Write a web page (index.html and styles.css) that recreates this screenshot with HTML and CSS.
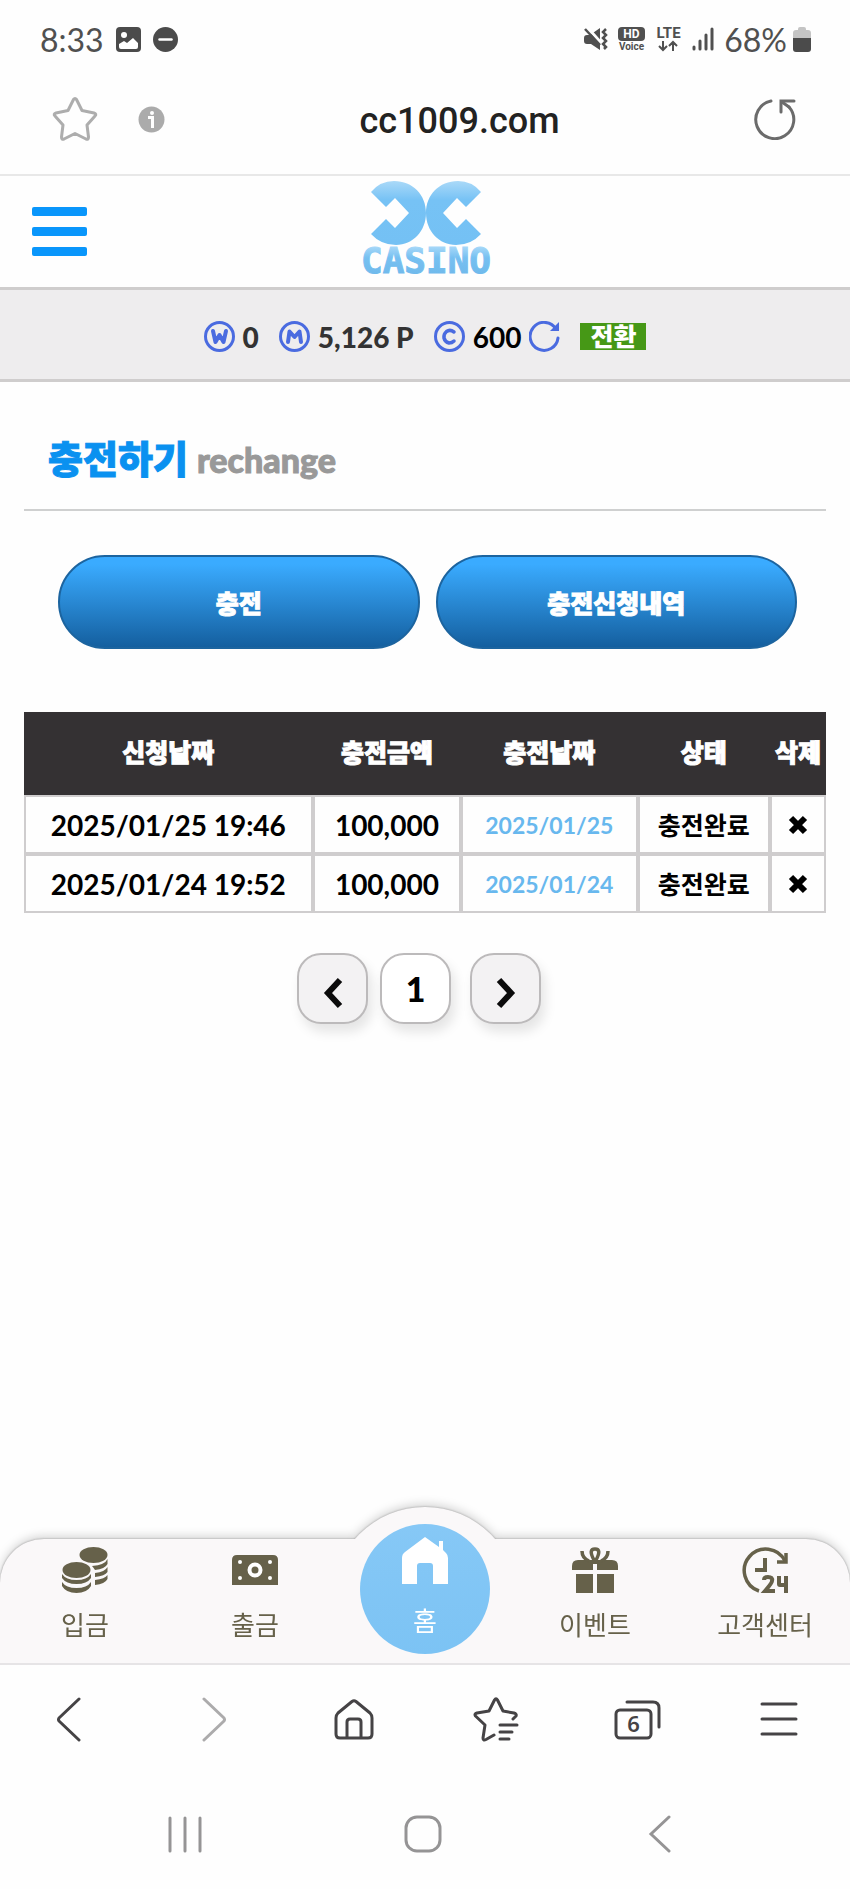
FILE: index.html
```html
<!DOCTYPE html>
<html lang="ko">
<head>
  <meta charset="utf-8">
  <meta name="viewport" content="width=device-width, initial-scale=1">
  <title>cc1009.com</title>
  <link rel="stylesheet" href="styles.css">
</head>
<body>
  <div class="status-bar">
    <div class="status-left">
      <span class="clock">8:33</span>
      <svg width="25" height="25" viewBox="0 0 25 25">
        <rect width="25" height="25" rx="4" fill="#4b4b4b"/>
        <circle cx="8" cy="8" r="3" fill="#fff"/>
        <path d="M3 17 L8 14 L11 16 L17 11 L22 16 V20 Q22 22 20 22 H5 Q3 22 3 20 Z" fill="#fff"/>
      </svg>
      <svg width="25" height="25" viewBox="0 0 25 25">
        <circle cx="12.500" cy="12.500" r="12.500" fill="#4b4b4b"/>
        <path d="M6.500 12.500 H18.500" stroke="#fff" stroke-width="2.500" stroke-linecap="round"/>
      </svg>
    </div>
    <div class="status-right">
      <svg width="24" height="25" viewBox="0 0 24 25" fill="none">
        <path d="M0 11 Q0 8 3 8 H6 L16 1 V23 L7 17 H3 Q0 17 0 14 Z" fill="#505050"/>
        <path d="M3 0 L19 18" stroke="#fff" stroke-width="3"/>
        <path d="M1 2 L16 18" stroke="#505050" stroke-width="2.500"/>
        <path d="M22 2 L19 5 L22 8 L19 11 L22 14 L19 17 L22 20 L20 22" stroke="#505050" stroke-width="2.500"/>
      </svg>
      <svg width="27" height="27" viewBox="0 0 27 27">
        <rect y="1" width="27" height="14" rx="4" fill="#505050"/>
        <text x="13.500" y="12" class="hd-text">HD</text>
        <text x="13.500" y="24" class="voice-text">Voice</text>
      </svg>
      <svg width="27" height="30" viewBox="0 0 27 30" fill="none">
        <text x="13.500" y="14" class="lte-text">LTE</text>
        <path d="M8 17 V26 M4 22 L8 26 L12 22 M18 27 V18 M14 22 L18 18 L22 22" stroke="#505050" stroke-width="2"/>
      </svg>
      <svg width="22" height="24" viewBox="0 0 22 24" stroke="#505050" stroke-width="3" stroke-linecap="round">
        <path d="M2 20 V22 M8 14 V22 M14 8 V22 M20 2 V22"/>
      </svg>
      <span class="battery-text">68%</span>
      <svg width="18" height="25" viewBox="0 0 18 25">
        <path d="M3 3 H5 V2 Q5 0 7 0 H11 Q13 0 13 2 V3 H15 Q18 3 18 6 V12 H0 V6 Q0 3 3 3 Z" fill="#c4c4c4"/>
        <path d="M0 11 H18 V22 Q18 25 15 25 H3 Q0 25 0 22 Z" fill="#4b4b4b"/>
      </svg>
    </div>
  </div>

  <div class="url-bar">
    <div class="url-left">
      <button type="button" aria-label="Bookmark">
        <svg width="46" height="46" viewBox="0 0 46 46" fill="none" stroke="#adadad" stroke-width="3" stroke-linejoin="round">
          <path d="M21.500 3.500 Q23 1.500 24.500 3.500 L30 14.500 L42 17 Q45 18 43 20 L35 29 L36.500 41 Q36.500 44 34 43 L23 37.500 L12 43 Q9.500 44 9.500 41 L11 29 L3 20 Q1 18 4 17 L16 14.500 Z"/>
        </svg>
      </button>
      <button type="button" aria-label="Site info">
        <svg width="27" height="27" viewBox="0 0 27 27">
          <circle cx="13.500" cy="13.500" r="13" fill="#ababab"/>
          <path d="M10 11.500 H14.500 V22" fill="none" stroke="#fff" stroke-width="3"/>
          <circle cx="14" cy="7" r="2" fill="#fff"/>
        </svg>
      </button>
    </div>
    <span class="url">cc1009.com</span>
    <button type="button" aria-label="Reload">
      <svg width="42" height="42" viewBox="0 0 42 42" fill="none" stroke="#6b6b6b" stroke-width="3" stroke-linecap="round">
        <path d="M17 3 A19 19 0 1 0 35 9"/>
        <path d="M27 14 V3 H40"/>
        <path d="M28 4 L35 9"/>
      </svg>
    </button>
  </div>

  <header class="site-header">
    <button type="button" class="menu-btn" aria-label="Menu">
      <span></span>
      <span></span>
      <span></span>
    </button>
    <a href="#" class="logo" aria-label="CC CASINO">
      <svg width="134" height="104" viewBox="-2 0 134 104">
        <defs>
          <linearGradient id="markFill" gradientUnits="userSpaceOnUse" x1="0" y1="1" x2="0" y2="65">
            <stop offset="0" stop-color="#aad9f8"/>
            <stop offset=".3" stop-color="#76c2f5"/>
            <stop offset="1" stop-color="#74c1f4"/>
          </linearGradient>
          <linearGradient id="wordFill" gradientUnits="userSpaceOnUse" x1="0" y1="67" x2="0" y2="94">
            <stop offset="0" stop-color="#a5d7f8"/>
            <stop offset=".4" stop-color="#76c0f1"/>
            <stop offset="1" stop-color="#70baec"/>
          </linearGradient>
        </defs>
        <g fill="url(#markFill)">
          <path d="M11 12 Q20 1 34 1 C53 1 66 15 66 33 C66 51 53 65 36 65 Q21 65 11 54 L26 39 L35 48 L49 33 L35 18 L26 27 Z"/>
          <path d="M121 12 Q112 1 98 1 C79 1 66 15 66 33 C66 51 79 65 96 65 Q111 65 121 54 L106 39 L97 48 L83 33 L97 18 L106 27 Z"/>
        </g>
        <text x="66" y="93" class="logo-text" fill="url(#wordFill)" stroke="url(#wordFill)">CASINO</text>
      </svg>
    </a>
  </header>

  <div class="balance-bar">
    <div class="balance">
      <svg width="31" height="31" viewBox="0 0 31 31" fill="none" stroke="#4a6be0" stroke-width="3">
        <circle cx="15.500" cy="15.500" r="14"/>
        <path d="M9 10 L11.500 21 L15.500 14 L19.500 21 L22 10" stroke-width="4" stroke-linejoin="round" stroke-linecap="round"/>
      </svg>
      <span>0</span>
    </div>
    <div class="balance">
      <svg width="31" height="31" viewBox="0 0 31 31" fill="none" stroke="#4a6be0" stroke-width="3">
        <circle cx="15.500" cy="15.500" r="14"/>
        <path d="M9 21 L10.500 10.500 L15.500 16 L20.500 10.500 L22 21" stroke-width="4" stroke-linejoin="round" stroke-linecap="round"/>
      </svg>
      <span>5,126 P</span>
    </div>
    <div class="balance casino">
      <svg width="31" height="31" viewBox="0 0 31 31" fill="none" stroke="#4a6be0" stroke-width="3">
        <circle cx="15.500" cy="15.500" r="14"/>
        <path d="M20 11 Q16 8 12.500 10.500 Q9.500 13 10 17 Q11 21 15 22 Q18 22 20 20" stroke-width="3.500" stroke-linecap="round"/>
      </svg>
      <span>600</span>
      <button type="button" aria-label="Refresh">
        <svg width="31" height="31" viewBox="0 0 31 31" fill="none" stroke="#4a6be0" stroke-width="3">
          <path d="M27 8 A14 14 0 1 0 29 17" stroke-linecap="round"/>
          <path d="M30 1 V10 H21 Z" fill="#4a6be0" stroke="none"/>
        </svg>
      </button>
    </div>
    <button type="button" class="convert-btn">전환</button>
  </div>

  <main class="content">
    <h1 class="page-title">충전하기 <small>rechange</small></h1>

    <div class="tabs">
      <button type="button">충전</button>
      <button type="button">충전신청내역</button>
    </div>

    <table class="history">
      <colgroup>
        <col class="col-request">
        <col class="col-amount">
        <col class="col-date">
        <col class="col-status">
        <col class="col-delete">
      </colgroup>
      <thead>
        <tr>
          <th>신청날짜</th>
          <th>충전금액</th>
          <th>충전날짜</th>
          <th>상태</th>
          <th>삭제</th>
        </tr>
      </thead>
      <tbody>
        <tr>
          <td>2025/01/25 19:46</td>
          <td>100,000</td>
          <td class="date">2025/01/25</td>
          <td class="state">충전완료</td>
          <td>
            <button type="button" aria-label="삭제">
              <svg width="20" height="20" viewBox="0 0 20 20"><path d="M3 3 L17 17 M17 3 L3 17" stroke="#000" stroke-width="6"/></svg>
            </button>
          </td>
        </tr>
        <tr>
          <td>2025/01/24 19:52</td>
          <td>100,000</td>
          <td class="date">2025/01/24</td>
          <td class="state">충전완료</td>
          <td>
            <button type="button" aria-label="삭제">
              <svg width="20" height="20" viewBox="0 0 20 20"><path d="M3 3 L17 17 M17 3 L3 17" stroke="#000" stroke-width="6"/></svg>
            </button>
          </td>
        </tr>
      </tbody>
    </table>

    <div class="pagination">
      <button type="button" class="arrow" aria-label="Previous">
        <svg width="20" height="32" viewBox="0 0 20 32" fill="none" stroke="#0b0b0b" stroke-width="6"><path d="M17 3 L5 16 L17 29"/></svg>
      </button>
      <button type="button">1</button>
      <button type="button" class="arrow next" aria-label="Next">
        <svg width="20" height="32" viewBox="0 0 20 32" fill="none" stroke="#0b0b0b" stroke-width="6"><path d="M3 3 L15 16 L3 29"/></svg>
      </button>
    </div>
  </main>

  <nav class="bottom-nav">
    <a href="#">
      <svg width="46" height="46" viewBox="0 0 46 46" fill="#66614a">
        <ellipse cx="31.500" cy="8" rx="14" ry="8"/>
        <path d="M30 19 Q43 18 45.500 12 V17 Q43 22 33 23 Q31 20 30 19 Z"/>
        <path d="M33 26 Q43 25 45.500 20 V25 Q43 29 33 30 Z"/>
        <path d="M33 33 Q43 32 45.500 28 V32 Q43 37 33 38 Z"/>
        <ellipse cx="14.500" cy="23" rx="14" ry="8"/>
        <path d="M0 27 Q4 33 14.500 33 Q25 33 29 27 V31 Q25 37 14.500 37 Q4 37 0 31 Z"/>
        <path d="M0 35 Q4 41 14.500 41 Q25 41 29 35 V39 Q25 46 14.500 46 Q4 46 0 39 Z"/>
      </svg>
      <span>입금</span>
    </a>
    <a href="#">
      <svg width="46" height="46" viewBox="0 0 46 46">
        <path d="M5 8 H41 Q46 8 46 13 V38 H0 V13 Q0 8 5 8 Z" fill="#66614a"/>
        <circle cx="23" cy="23" r="5.500" fill="none" stroke="#fff" stroke-width="4"/>
        <g fill="#fff">
          <circle cx="8" cy="15" r="2"/>
          <circle cx="38" cy="15" r="2"/>
          <circle cx="8" cy="31" r="2"/>
          <circle cx="38" cy="31" r="2"/>
        </g>
      </svg>
      <span>출금</span>
    </a>
    <div class="home-slot">
      <a href="#" class="home">
        <svg width="48" height="48" viewBox="0 0 48 48" fill="#fff">
          <path d="M24 0 L38 10 V4 H42 V13 L45 16 Q47 18 47 21 V47 H32 V29 Q32 26 29 26 H19 Q16 26 16 29 V47 H1 V21 Q1 17 4 15 Z"/>
        </svg>
        <span>홈</span>
      </a>
    </div>
    <a href="#">
      <svg width="46" height="46" viewBox="0 0 46 46" fill="#66614a">
        <path d="M0 23 V19 Q0 13 6 13 H40 Q46 13 46 19 V23 H25 V17 H21 V23 Z"/>
        <path d="M4 27 H21 V46 H4 Z M25 27 H42 V46 H25 Z"/>
        <g fill="none" stroke="#66614a" stroke-width="3.500">
          <path d="M22 13 Q16 2 23 2 Q30 2 24 13 M17 14 Q10 11 10 4 M29 14 Q36 11 36 4"/>
        </g>
      </svg>
      <span>이벤트</span>
    </a>
    <a href="#">
      <svg width="46" height="46" viewBox="0 0 46 46" fill="none" stroke="#66614a" stroke-width="3.500">
        <path d="M17 44 A21.500 21.500 0 1 1 43 14"/>
        <path d="M44 6 V15 H35"/>
        <path d="M23 11 V23 H13" stroke-width="4"/>
        <path d="M22 33 Q22 30 26 30 Q31 30 30 34 Q30 36 23 44 H33 M37 29 V37 Q37 38 38 38 H44 M44 29 V46" stroke-width="4"/>
      </svg>
      <span>고객센터</span>
    </a>
  </nav>

  <div class="browser-bar">
    <button type="button" aria-label="Back">
      <svg width="46" height="46" viewBox="0 0 46 46"><path d="M31 3 L11 22 Q10 23.500 11 25 L31 44"/></svg>
    </button>
    <button type="button" class="muted" aria-label="Forward">
      <svg width="46" height="46" viewBox="0 0 46 46"><path d="M15 3 L35 22 Q36 23.500 35 25 L15 44"/></svg>
    </button>
    <button type="button" aria-label="Home">
      <svg width="46" height="46" viewBox="0 0 46 46"><path d="M21 5.500 Q23 4 25 5.500 L39 17 Q41 19 41 22 V38 Q41 42 37 42 H9 Q5 42 5 38 V22 Q5 19 7 17 Z M16 42 V26 Q16 23 19 23 H27 Q30 23 30 26 V42"/></svg>
    </button>
    <button type="button" aria-label="Bookmarks">
      <svg width="46" height="46" viewBox="0 0 46 46"><path d="M40 23 L43 20 Q44 18 41 17 L30 15 L24.500 4 Q23 1.500 21.500 4 L16 15 L4 17 Q1 18 2.500 20 L12 29 L10 42 Q10 45 13 43.500 L21 39 M27 29 H44 M27 36 H39 M27 43 H36"/></svg>
    </button>
    <button type="button" aria-label="Tabs">
      <svg width="48" height="46" viewBox="0 0 48 46">
        <path d="M14 6 H40 Q46 6 46 12 V31"/>
        <rect x="3" y="14" width="35" height="28" rx="4"/>
        <text x="20.500" y="36" class="tab-count">6</text>
      </svg>
    </button>
    <button type="button" aria-label="Browser menu">
      <svg width="46" height="46" viewBox="0 0 46 46"><path d="M6 8 H40 M6 23 H40 M6 38 H40"/></svg>
    </button>
  </div>

  <div class="system-bar">
    <button type="button" aria-label="Recents">
      <svg width="38" height="38" viewBox="0 0 38 38"><path d="M4 3 V36 M19 3 V36 M34 3 V36"/></svg>
    </button>
    <button type="button" aria-label="System home">
      <svg width="38" height="38" viewBox="0 0 38 38"><rect x="2" y="2" width="34" height="34" rx="11"/></svg>
    </button>
    <button type="button" aria-label="System back">
      <svg width="38" height="38" viewBox="0 0 38 38"><path d="M27 2 L9 19 L27 36"/></svg>
    </button>
  </div>
</body>
</html>
```
FILE: styles.css
```css
* {
  box-sizing: border-box;
}
body {
  margin: 0;
  min-height: 100vh;
  display: flex;
  flex-direction: column;
  background-color: #fefefe;
  color: #000;
  font-family: Lato, "Noto Sans CJK KR", sans-serif;
}
button {
  padding: 0;
  border: none;
  background: none;
  color: inherit;
  font-family: inherit;
  cursor: pointer;
}
a {
  text-decoration: none;
  color: inherit;
}
svg {
  display: block;
}

/* phone status bar */
.status-bar {
  display: flex;
  justify-content: space-between;
  height: 78px;
  padding: 0 39px 0 40px;
  color: #505050;
  font-size: 32px;
}
.status-left, .status-right {
  display: flex;
  align-items: center;
  gap: 12px;
}
.status-right {
  gap: 10px;
}
.battery-text {
  margin-right: -4px;
}
.hd-text, .voice-text, .lte-text {
  font-family: Roboto, sans-serif;
  font-weight: 700;
  text-anchor: middle;
  fill: #505050;
}
.hd-text {
  font-size: 12px;
  fill: #fff;
}
.voice-text {
  font-size: 10px;
}
.lte-text {
  font-size: 15px;
}

/* address bar */
.url-bar {
  display: flex;
  align-items: center;
  height: 98px;
  padding: 0 54px 14px 52px;
  border-bottom: 2px solid #e8e8e8;
}
.url-left {
  display: flex;
  align-items: center;
  gap: 40px;
}
.url {
  flex: 1;
  padding-top: 4px;
  text-align: center;
  font-family: Roboto, sans-serif;
  font-size: 36px;
  font-weight: 500;
  color: #222;
}

/* site header */
.site-header {
  display: grid;
  grid-template-columns: 1fr auto 1fr;
  align-items: center;
  height: 114px;
  padding: 0 32px;
  border-bottom: 3px solid #cfcdcd;
}
.menu-btn {
  width: 55px;
  display: flex;
  flex-direction: column;
  gap: 11px;
}
.menu-btn span {
  height: 9px;
  border-radius: 2px;
  background-color: #0996fb;
}
.logo-text {
  font-family: "DejaVu Sans Mono", monospace;
  font-size: 36px;
  font-weight: 700;
  text-anchor: middle;
}

/* balances */
.balance-bar {
  display: flex;
  justify-content: center;
  align-items: center;
  gap: 20px;
  height: 92px;
  padding-top: 4px;
  background-color: #eeedee;
  border-bottom: 3px solid #cfcdcd;
  color: #333;
  font-size: 28px;
  font-weight: 900;
}
.balance {
  display: flex;
  align-items: center;
  gap: 8px;
}
.casino {
  color: #000;
  font-weight: 700;
}
.convert-btn {
  width: 66px;
  height: 27px;
  background-color: #469816;
  color: #fff;
  font-size: 25px;
  font-weight: 900;
  line-height: 25px;
}

/* page content */
.content {
  flex: 1;
  padding: 0 24px;
}
.page-title {
  margin: 0;
  height: 129px;
  padding: 49px 24px 0;
  border-bottom: 2px solid #cfd0d0;
  color: #0a91f0;
  font-size: 38px;
  font-weight: 900;
  line-height: 54px;
  -webkit-text-stroke: 1px;
}
.page-title small {
  color: #999;
  font-size: 34px;
}
.tabs {
  display: flex;
  gap: 16px;
  margin: 44px 29px 63px 34px;
}
.tabs button {
  flex: 1;
  height: 94px;
  border: 2px solid #1c649f;
  border-radius: 47px;
  background: linear-gradient(#3aabff 8%, #145f9f);
  color: #fff;
  font-size: 25px;
  font-weight: 900;
  -webkit-text-stroke: 1px;
}
.history {
  width: 100%;
  table-layout: fixed;
  border-collapse: separate;
  border-spacing: 0;
  text-align: center;
}
.col-request {
  width: 36%;
}
.col-amount {
  width: 18.5%;
}
.col-date {
  width: 22%;
}
.col-status {
  width: 16.5%;
}
.col-delete {
  width: 7%;
}
.history th {
  height: 83px;
  padding: 0 0 6px;
  background-color: #343133;
  color: #fff;
  font-size: 25px;
  font-weight: 900;
  -webkit-text-stroke: 1px;
}
.history td {
  height: 59px;
  padding: 0;
  border: 2px solid #cfcdce;
  font-size: 28px;
  font-weight: 700;
  line-height: 40px;
}
.history td.date {
  color: #68b8ee;
  font-size: 23px;
}
.history td.state {
  font-size: 25px;
}
.history td button {
  display: block;
  margin: 0 auto;
}
.pagination {
  display: flex;
  justify-content: center;
  gap: 12px;
  margin: 40px 12px 60px 0;
}
.pagination button {
  width: 71px;
  height: 71px;
  border: 2px solid #bcbabb;
  border-radius: 24px;
  background-color: #fff;
  box-shadow: 4px 8px 12px rgba(0, 0, 0, 0.1);
  font-size: 34px;
  font-weight: 900;
}
.pagination .arrow {
  display: flex;
  justify-content: center;
  align-items: center;
  padding-top: 8px;
  background-color: #f3f2f3;
}
.pagination .next {
  margin-left: 7px;
}

/* bottom menu */
.bottom-nav {
  position: relative;
  display: grid;
  grid-template-columns: repeat(5, 1fr);
  height: 124px;
  padding-top: 8px;
  border-radius: 44px 44px 0 0;
  background-color: #faf8f9;
  filter: drop-shadow(0 0 1px #999) drop-shadow(0 -3px 4px rgba(0, 0, 0, 0.15));
  color: #66614a;
  font-size: 26px;
}
.bottom-nav::before {
  content: "";
  position: absolute;
  top: -32px;
  left: 50%;
  width: 186px;
  height: 93px;
  margin-left: -93px;
  border-radius: 93px 93px 0 0;
  background-color: #faf8f9;
}
.bottom-nav a {
  display: flex;
  flex-direction: column;
  align-items: center;
  gap: 16px;
  line-height: 32px;
}
.home-slot {
  position: relative;
}
.bottom-nav .home {
  position: absolute;
  top: -23px;
  left: 50%;
  width: 130px;
  height: 130px;
  margin-left: -65px;
  padding-top: 13px;
  gap: 20px;
  border-radius: 50%;
  background: linear-gradient(#86c8f6, #7cc3f4);
  color: #fff;
}

/* browser toolbar */
.browser-bar {
  position: relative;
  display: grid;
  grid-template-columns: repeat(6, 1fr);
  justify-items: center;
  align-items: center;
  height: 110px;
  border-top: 2px solid #e6e4e6;
  background-color: #fefefe;
}
.browser-bar svg {
  fill: none;
  stroke: #454345;
  stroke-width: 3;
  stroke-linecap: round;
  stroke-linejoin: round;
}
.browser-bar .muted svg {
  stroke: #acabac;
}
.browser-bar .tab-count {
  fill: #454345;
  stroke: none;
  font-family: "Noto Sans", sans-serif;
  font-size: 22px;
  font-weight: 600;
  text-anchor: middle;
}

/* system buttons */
.system-bar {
  display: grid;
  grid-template-columns: repeat(3, 1fr);
  justify-items: center;
  align-items: center;
  height: 116px;
  padding: 6px 70px 0 66px;
}
.system-bar svg {
  fill: none;
  stroke: #959495;
  stroke-width: 3;
  stroke-linecap: round;
}
```
